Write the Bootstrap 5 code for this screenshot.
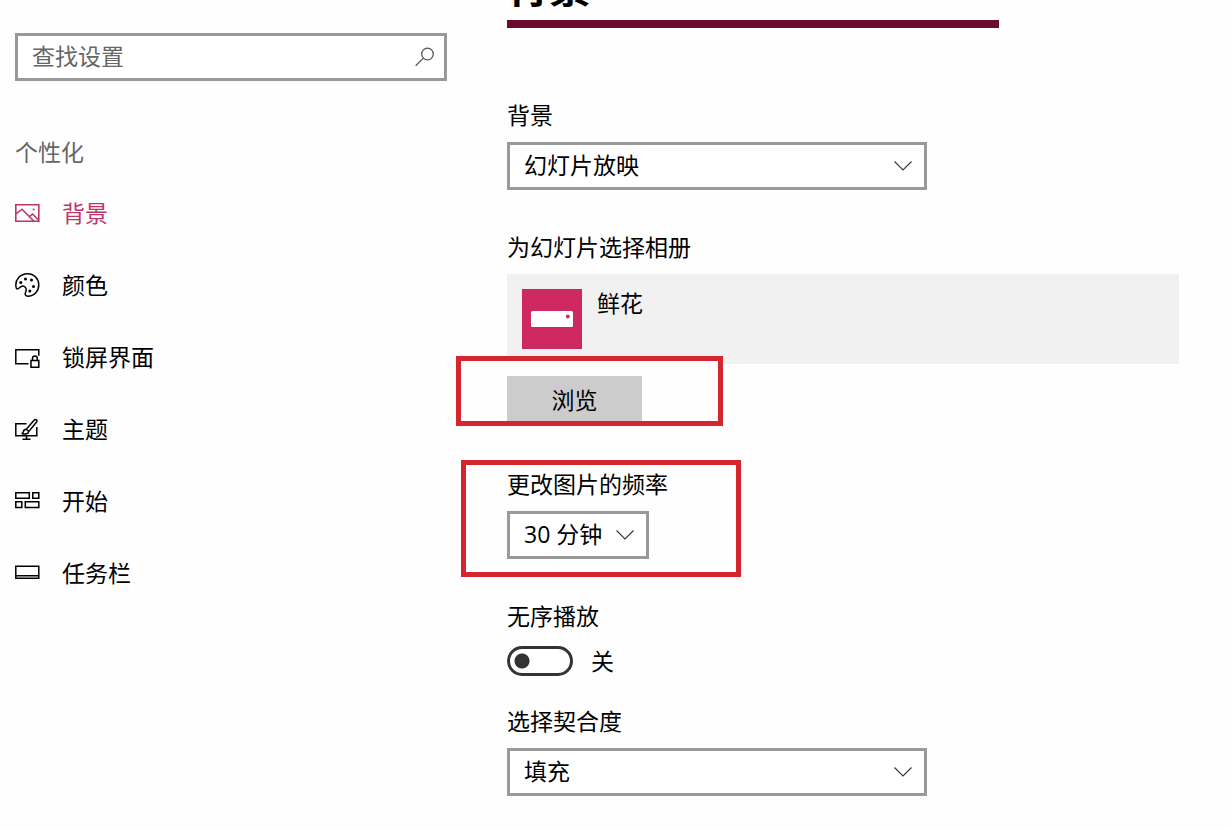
<!DOCTYPE html>
<html lang="zh-CN">
<head>
<meta charset="utf-8">
<meta name="viewport" content="width=device-width, initial-scale=1">
<title>个性化 - 背景</title>
<link href="https://cdn.jsdelivr.net/npm/bootstrap@5.3.0/dist/css/bootstrap.min.css" rel="stylesheet">
<style>
  body {
    font-family: "Open Sans", "Noto Sans CJK SC", sans-serif;
    font-size: 23px;
    font-weight: 400;
    line-height: 28px;
    color: #000;
    background: #fefefe;
    overflow-x: hidden;
  }
  .shell { gap: 60px; }
  .side { flex: 0 1 447px; padding: 33px 0 0 15px; }
  .pane { min-width: 0; padding-right: 52px; }

  .field, .field:focus {
    height: 48px;
    padding: 0 14px 2px;
    border: 3px solid #999;
    border-radius: 0;
    color: #000;
    background-color: #fff;
    font-size: 23px;
    font-weight: 400;
    line-height: 28px;
    box-shadow: none;
  }
  .field::placeholder { color: #666; opacity: 1; }
  select.field {
    background-image: url("data:image/svg+xml,%3Csvg xmlns='http://www.w3.org/2000/svg' viewBox='0 0 18 10'%3E%3Cpath d='M.5.5 9 9 17.5.5' fill='none' stroke='%23333' stroke-width='1.1'/%3E%3C/svg%3E");
    background-size: 18px 10px;
    background-position: right 12px center;
  }
  .wide { max-width: 420px; }
  .brief { width: 142px; }
  .lens { top: 12px; right: 11px; color: #555; }

  .group-name { margin: 57px 0 11px; color: #666; font-size: 23px; font-weight: 400; line-height: 28px; }
  .side-link { height: 72px; gap: 22px; padding: 0; color: #000; }
  .side-link:hover { color: #555; }
  .side-link.active { color: #c0336a; }
  .side-link svg, .lens svg { display: block; fill: none; stroke: currentColor; }

  .page-title { margin: -37px 0 9px; font-size: 42px; font-weight: 700; line-height: 48px; }
  .accent-bar { max-width: 492px; height: 8px; margin-bottom: 73px; background: #6b0a2b; }
  .block { margin-bottom: 43px; }
  .caption { display: block; margin-bottom: 13px; }

  .album { gap: 15px; padding: 15px; background: #f1f1f1; }
  .album svg { display: block; }
  .browse-row { margin: 12px 0 49px; }
  .browse { z-index: 1; width: 135px; height: 45px; padding: 3px 0 0; border: 0; border-radius: 0; background: #ccc; color: #000; font-size: 23px; font-weight: 400; line-height: 28px; }
  .browse:hover { background: #bbb; }

  /* red annotation frames around the two settings */
  .frame { border: 5px solid #d5262f; pointer-events: none; }
  .frame-browse { top: -20px; left: -51px; width: 267px; height: 70px; background: #fefefe; }
  .frame-rate { top: -10px; left: -46px; width: 280px; height: 117px; }

  .toggle-row { gap: 18px; margin: 16px 0 31px; }
  .toggle-row .toggle-box {
    float: none;
    width: 66px;
    height: 30px;
    margin: 0;
    border: 3px solid #333;
    border-radius: 15px;
    background: #fff radial-gradient(circle at 12px 12px, #333 7px, transparent 8px) no-repeat;
    box-shadow: none;
  }
  .toggle-row .toggle-box:checked { background: #333 radial-gradient(circle at 48px 12px, #fff 7px, transparent 8px) no-repeat; }
</style>
</head>
<body>
<div class="shell d-flex">
  <aside class="side">
    <form class="position-relative" role="search">
      <input class="form-control field" type="text" placeholder="查找设置" aria-label="查找设置">
      <button class="lens btn border-0 p-0 position-absolute" type="button" aria-label="搜索">
        <svg width="24" height="24" viewBox="0 0 24 24" stroke-width="1.3"><circle cx="15.5" cy="9" r="5.8"/><path d="M11.4 13.1 3.7 20.8"/></svg>
      </button>
    </form>
    <h2 class="group-name">个性化</h2>
    <nav class="nav flex-column">
      <a class="nav-link side-link active d-flex align-items-center" href="#" aria-current="page">
        <svg width="25" height="24" viewBox="0 0 25 24" stroke-width="1.6"><path d="M.8 3.800h23v16.500H.8zM.8 13.200l6.200-5 12 12M14.500 15.700l3-2.700 6.300 6.300"/><circle cx="18.600" cy="8.400" r="1" fill="currentColor" stroke="none"/></svg>
        背景
      </a>
      <a class="nav-link side-link d-flex align-items-center" href="#">
        <svg width="25" height="24" viewBox="0 0 25 24" stroke-width="1.5"><path d="M1 13.8C-.2 6.5 5.500.8 12.500.8c6.500 0 11.300 5 11.300 11 0 6.500-4.700 11.400-11 11.400-2 0-3.200-1.700-2.300-3.600 1.500-3.300.3-6.600-2.700-6.600-2.700 0-3.700 3.100-5.600 3-.8-.1-1.100-1-1.200-2.200z"/><g fill="currentColor" stroke="none"><circle cx="5.800" cy="9.500" r="1.500"/><circle cx="10.500" cy="6" r="1.500"/><circle cx="16.500" cy="7" r="1.500"/><circle cx="18.500" cy="13.500" r="1.500"/><circle cx="14.800" cy="18" r="1.500"/></g></svg>
        颜色
      </a>
      <a class="nav-link side-link d-flex align-items-center" href="#">
        <svg width="25" height="24" viewBox="0 0 25 24" stroke-width="1.5"><path d="M13.500 18.700H.8V4.800h23v6M16 15.500h7.800v6.700H16zM17.500 15.500v-2a2.400 2.400 0 0 1 4.800 0v2"/></svg>
        锁屏界面
      </a>
      <a class="nav-link side-link d-flex align-items-center" href="#">
        <svg width="25" height="24" viewBox="0 0 25 24" stroke-width="1.5"><path d="M11.500 6.800H.8v12h21V10M11.500 18.800v3.500M7.500 22.300h8"/><path d="M11.300 12.200 19.300 3.100c1.500-1.500 3.600.2 2.300 2l-7.800 9.400zM11.300 12.200c-2.300 0-2.800 1.500-3 2.700-.1 1-.7 1.500-1.700 1.600 3.500 1 7.100.6 7.200-2"/></svg>
        主题
      </a>
      <a class="nav-link side-link d-flex align-items-center" href="#">
        <svg width="25" height="24" viewBox="0 0 25 24" stroke-width="1.5"><path d="M.8 3.800h13.500v5.500H.8zM17.800 3.800h6v5.500h-6zM.8 12.800h6v5.800h-6zM10.300 12.800h13.500v5.800H10.300z"/></svg>
        开始
      </a>
      <a class="nav-link side-link d-flex align-items-center" href="#">
        <svg width="25" height="24" viewBox="0 0 25 24" stroke-width="1.5"><path d="M.8 5.300h23v12H.8zM.8 14.700h23"/></svg>
        任务栏
      </a>
    </nav>
  </aside>

  <main class="pane flex-grow-1">
    <h1 class="page-title">背景</h1>
    <div class="accent-bar"></div>

    <div class="block">
      <label class="caption" for="bgType">背景</label>
      <select class="form-select field wide" id="bgType"><option>幻灯片放映</option></select>
    </div>

    <section>
      <span class="caption">为幻灯片选择相册</span>
      <div class="album d-flex align-items-start">
        <svg width="60" height="60" viewBox="0 0 60 60"><path fill="#cd2860" d="M0 0h60v60H0z"/><rect x="9" y="22" width="42" height="16" rx="1.5" fill="#fff"/><circle cx="45.800" cy="27.500" r="1.900" fill="#cd2860"/></svg>
        <span>鲜花</span>
      </div>
      <div class="browse-row position-relative">
        <div class="frame frame-browse position-absolute"></div>
        <button class="btn browse position-relative d-block" type="button">浏览</button>
      </div>
    </section>

    <div class="block position-relative">
      <div class="frame frame-rate position-absolute"></div>
      <label class="caption" for="rate">更改图片的频率</label>
      <select class="form-select field brief" id="rate"><option>30 分钟</option></select>
    </div>

    <div>
      <label class="d-block" for="shuffle">无序播放</label>
      <div class="toggle-row form-switch d-flex align-items-center p-0">
        <input class="form-check-input toggle-box" type="checkbox" role="switch" id="shuffle">
        <span>关</span>
      </div>
    </div>

    <div>
      <label class="caption" for="fit">选择契合度</label>
      <select class="form-select field wide" id="fit"><option>填充</option></select>
    </div>
  </main>
</div>
<script src="https://cdn.jsdelivr.net/npm/bootstrap@5.3.0/dist/js/bootstrap.bundle.min.js"></script>
</body>
</html>
